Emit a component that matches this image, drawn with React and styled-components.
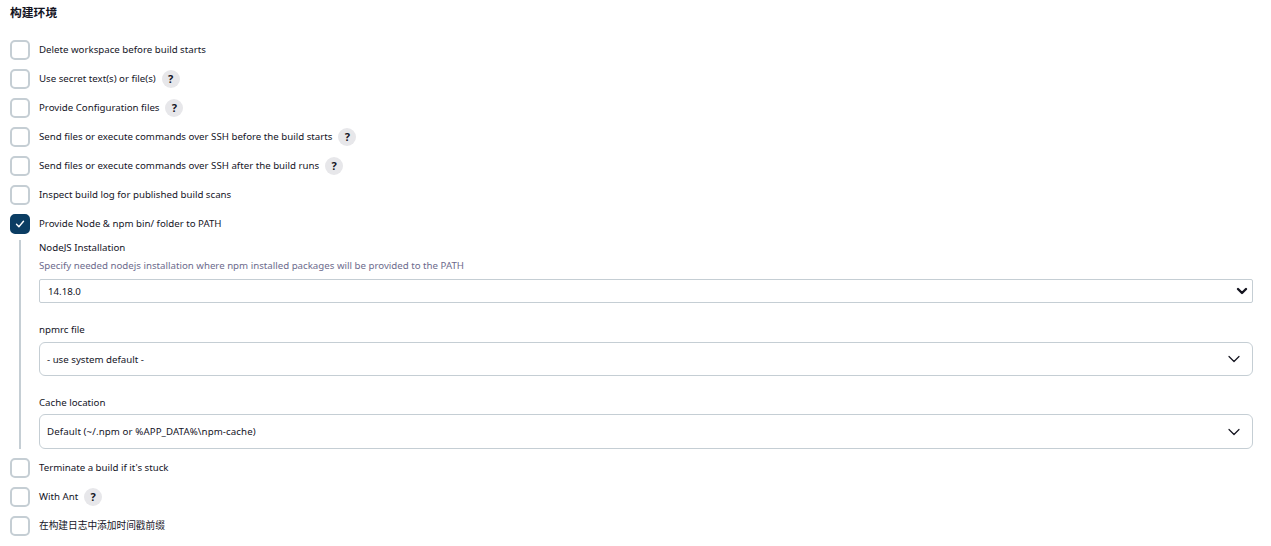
import React from "react";
import styled, { createGlobalStyle } from "styled-components";

const GlobalStyle = createGlobalStyle`
  html, body {
    margin: 0;
    background: #fff;
    color: #14141f;
    font-family: "Noto Sans", "Noto Sans CJK SC", sans-serif;
    font-size: 9.7px;
  }
`;

const Page = styled.div`
  padding: 3px 18px 0 10px;
  height: 543px;
  overflow: hidden;
`;

const Title = styled.h2`
  margin: 0 0 20px;
  height: 17px;
  font-size: 11.8px;
  line-height: 17px;
  font-weight: 700;
  font-family: "Noto Sans CJK SC", sans-serif;
`;

const List = styled.div`
  display: flex;
  flex-direction: column;
  gap: 9px;
`;

const Row = styled.div`
  display: flex;
  align-items: center;
  height: 20px;
`;

const Box = styled.span`
  box-sizing: border-box;
  flex: none;
  width: 20px;
  height: 20px;
  margin-right: 9px;
  border-radius: 5px;
  display: flex;
  align-items: center;
  justify-content: center;
  border: 2px solid ${({ $checked }) => ($checked ? "#0b3d63" : "#c5ced4")};
  background: ${({ $checked }) => ($checked ? "#0b3d63" : "#fff")};
`;

const Label = styled.span`
  line-height: 20px;
  height: 20px;
  white-space: nowrap;
`;

const Help = styled.span`
  width: 18px;
  height: 18px;
  margin-left: 6px;
  border-radius: 50%;
  background: #e7e7ea;
  font-size: 11px;
  font-weight: 700;
  text-align: center;
  line-height: 18px;
`;

const Nested = styled.div`
  margin: 6px 0 0 9px;
  height: 209px;
  padding-left: 18px;
  border-left: 2px solid #c5ced4;
`;

const Field = styled.div`
  margin-bottom: ${({ $gap }) => $gap}px;
`;

const FieldLabel = styled.div`
  line-height: 16px;
  height: 14px;
`;

const Hint = styled.div`
  margin-top: 5px;
  height: 14px;
  line-height: 14px;
  color: #6d6b8d;
`;

const SelectBox = styled.div`
  box-sizing: border-box;
  display: flex;
  align-items: center;
  justify-content: space-between;
  margin-top: ${({ $top = 6 }) => $top}px;
  height: ${({ $height = 34 }) => $height}px;
  padding: ${({ $native }) => ($native ? "0 4px 0 8px" : "0 12px 0 7px")};
  border: 1px solid #c5ced4;
  border-radius: ${({ $native }) => ($native ? "2px" : "6px")};
`;

const CacheValue = styled.span`
  letter-spacing: 0.1px;
`;

const Check = () => (
  <svg width="12" height="12" viewBox="0 0 12 12" fill="none">
    <path d="M2.5 6.3 4.9 8.7 9.5 3.3" stroke="#fff" strokeWidth="1.4" strokeLinecap="round" strokeLinejoin="round" />
  </svg>
);

const Chevron = ({ bold }) =>
  bold ? (
    <svg width="12" height="8" viewBox="0 0 12 8" fill="none">
      <path d="M2 2 6 6 10 2" stroke="#14141f" strokeWidth="2.4" strokeLinecap="round" strokeLinejoin="round" />
    </svg>
  ) : (
    <svg width="12" height="8" viewBox="0 0 12 8" fill="none">
      <path d="M1 1.5 6 6.5 11 1.5" stroke="#14141f" strokeWidth="1.2" strokeLinecap="round" strokeLinejoin="round" />
    </svg>
  );

const Option = ({ label, help, checked }) => (
  <Row>
    <Box $checked={checked}>{checked && <Check />}</Box>
    <Label>{label}</Label>
    {help && <Help>?</Help>}
  </Row>
);

const App = () => (
  <Page>
    <GlobalStyle />
    <Title>构建环境</Title>
    <List>
      <Option label="Delete workspace before build starts" />
      <Option label="Use secret text(s) or file(s)" help />
      <Option label="Provide Configuration files" help />
      <Option label="Send files or execute commands over SSH before the build starts" help />
      <Option label="Send files or execute commands over SSH after the build runs" help />
      <Option label="Inspect build log for published build scans" />
      <div>
        <Option label="Provide Node & npm bin/ folder to PATH" checked />
        <Nested>
          <Field $gap={19}>
            <FieldLabel>NodeJS Installation</FieldLabel>
            <Hint>Specify needed nodejs installation where npm installed packages will be provided to the PATH</Hint>
            <SelectBox $native $height={24}>
              14.18.0
              <Chevron bold />
            </SelectBox>
          </Field>
          <Field $gap={19}>
            <FieldLabel>npmrc file</FieldLabel>
            <SelectBox>
              - use system default -
              <Chevron />
            </SelectBox>
          </Field>
          <Field $gap={0}>
            <FieldLabel>Cache location</FieldLabel>
            <SelectBox $top={5} $height={35}>
              <CacheValue>{"Default (~/.npm or %APP_DATA%\\npm-cache)"}</CacheValue>
              <Chevron />
            </SelectBox>
          </Field>
        </Nested>
      </div>
      <Option label="Terminate a build if it's stuck" />
      <Option label="With Ant" help />
      <Option label="在构建日志中添加时间戳前缀" />
    </List>
  </Page>
);

export default App;
